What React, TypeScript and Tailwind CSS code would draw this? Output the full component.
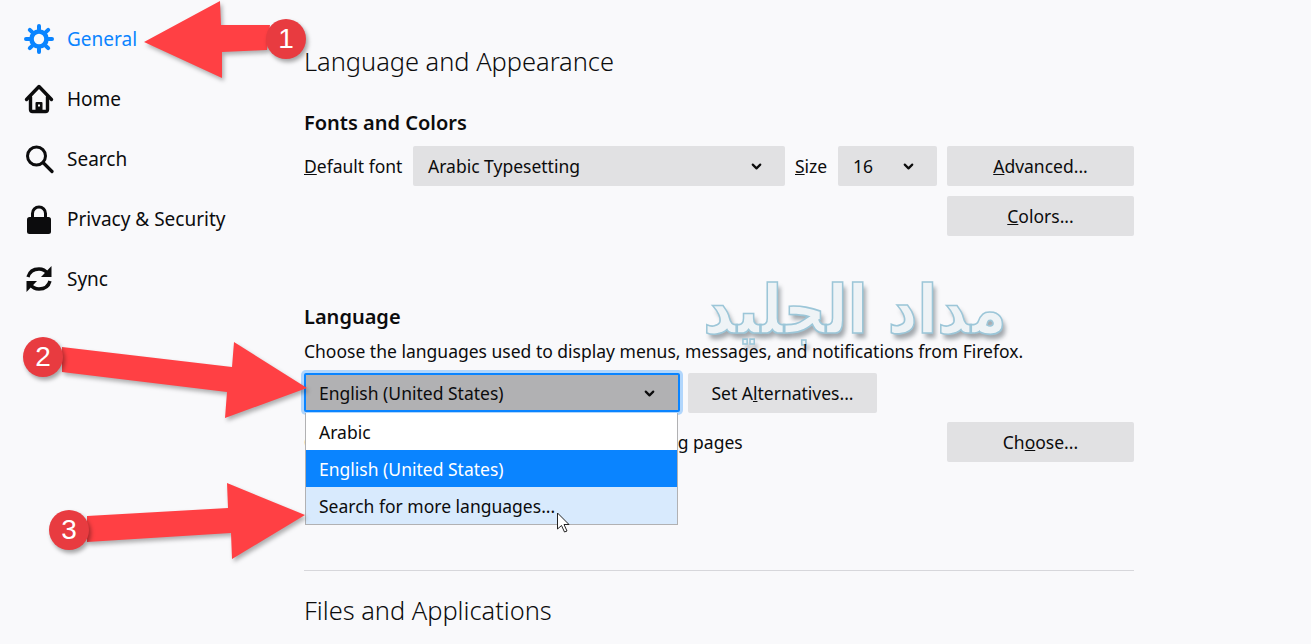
import React from "react";
import { ChevronDown } from "lucide-react";

const font = { fontFamily: '"Noto Sans", "Open Sans", sans-serif' };

const GearIcon = () => (
  <svg width="30" height="30" viewBox="0 0 30 30" fill="none" stroke="#0a84ff" strokeLinecap="round">
    <circle cx="15" cy="15" r="7.5" strokeWidth="4.6" />
    <g strokeWidth="4">
      <path d="M15 2v3.500M15 24.500V28M2 15h3.500M24.500 15H28" />
      <path d="M5.800 5.800l2.400 2.400M21.800 21.800l2.400 2.400M5.800 24.200l2.400-2.400M21.800 8.200l2.400-2.400" />
    </g>
  </svg>
);

const HomeIcon = () => (
  <svg width="30" height="30" viewBox="0 0 30 30" fill="none" stroke="#0c0c0d" strokeLinecap="round" strokeLinejoin="round">
    <path d="M2.500 15.500 15 2.500l12.500 13" strokeWidth="3.400" />
    <path d="M6.500 13v12.500a2 2 0 0 0 2 2h13a2 2 0 0 0 2-2V13" strokeWidth="3.400" />
    <path d="M11.500 27v-8a1 1 0 0 1 1-1h5a1 1 0 0 1 1 1v8z" fill="#0c0c0d" stroke="none" />
    <rect x="14" y="20.500" width="2" height="2" fill="#fff" stroke="none" />
  </svg>
);

const SearchIcon = () => (
  <svg width="30" height="30" viewBox="0 0 30 30" fill="none" stroke="#0c0c0d" strokeLinecap="round">
    <circle cx="12.500" cy="12" r="9" strokeWidth="3" />
    <path d="M19.500 19 28 27.500" strokeWidth="3.200" />
  </svg>
);

const LockIcon = () => (
  <svg width="30" height="30" viewBox="0 0 30 30" fill="none">
    <path d="M8.500 14V9.500a6.500 6.500 0 0 1 13 0V14" stroke="#0c0c0d" strokeWidth="3" />
    <rect x="3" y="13" width="24" height="17" rx="2.500" fill="#0c0c0d" />
  </svg>
);

const SyncIcon = () => (
  <svg width="30" height="30" viewBox="0 0 30 30" fill="none" stroke="#0c0c0d" strokeWidth="3.400">
    <path d="M4 13C5.500 7.500 10 5 15 5c3.500 0 6.500 1.500 8.500 4.500" />
    <path d="M26 17c-1.500 5.500-6 8-11 8-3.500 0-6.500-1.500-8.500-4.500" />
    <path d="M27.500 2v11h-10.500z" fill="#0c0c0d" stroke="none" />
    <path d="M2.500 28V17h10.500z" fill="#0c0c0d" stroke="none" />
  </svg>
);

const navItems = [
  { label: "General", icon: <GearIcon />, active: true },
  { label: "Home", icon: <HomeIcon /> },
  { label: "Search", icon: <SearchIcon /> },
  { label: "Privacy & Security", icon: <LockIcon /> },
  { label: "Sync", icon: <SyncIcon /> },
];

const GreyButton = ({ children, className = "" }: { children: React.ReactNode; className?: string }) => (
  <div className={`h-10 rounded-[2px] bg-[#e1e1e3] flex items-center justify-center text-[#0c0c0d] ${className}`}>{children}</div>
);

const Badge = ({ n, className }: { n: number; className: string }) => (
  <div
    className={`absolute w-10 h-10 rounded-full bg-[#e83b40] text-white flex items-center justify-center text-[28px] shadow-[2px_3px_4px_rgba(0,0,0,0.35)] ${className}`}
    style={{ fontFamily: '"Liberation Sans", sans-serif' }}
  >
    {n}
  </div>
);

export default function App() {
  return (
    <div className="relative flex w-[1311px] h-[644px] overflow-hidden bg-[#f9f9fb] text-[#0c0c0d] text-[17.5px]" style={font}>
      {/* sidebar */}
      <nav className="w-[304px] shrink-0 pt-[9px] pl-[24px] text-[19px]">
        {navItems.map((item) => (
          <div key={item.label} className={`h-[60px] flex items-center gap-[13px] ${item.active ? "text-[#0a84ff]" : ""}`}>
            {item.icon}
            <span>{item.label}</span>
          </div>
        ))}
      </nav>

      {/* main column */}
      <main className="w-[830px] flex flex-col">
        <h1 className="mt-[43px] h-9 leading-9 text-[25.4px] font-light">Language and Appearance</h1>

        <h2 className="mt-[30px] h-7 leading-7 text-[20px] font-semibold">Fonts and Colors</h2>
        <div className="mt-[9px] flex items-center">
          <span className="w-[109px]"><u>D</u>efault font</span>
          <div className="w-[372px] h-10 rounded-[2px] bg-[#e1e1e3] flex items-center justify-between pl-[15px] pr-[21px]">
            <span>Arabic Typesetting</span>
            <ChevronDown size={15} strokeWidth={3.5} />
          </div>
          <span className="ml-[10px] w-[43px]"><u>S</u>ize</span>
          <div className="w-[99px] h-10 rounded-[2px] bg-[#e1e1e3] flex items-center justify-between pl-[15px] pr-[21px]">
            <span>16</span>
            <ChevronDown size={15} strokeWidth={3.5} />
          </div>
          <GreyButton className="ml-[10px] w-[187px]"><span><u>A</u>dvanced...</span></GreyButton>
        </div>
        <GreyButton className="mt-[10px] ml-[643px] w-[187px]"><span><u>C</u>olors...</span></GreyButton>

        <h2 className="mt-[67px] h-7 leading-7 text-[20px] font-semibold">Language</h2>
        <p className="relative z-10 mt-[6px] h-7 leading-7 whitespace-nowrap">Choose the languages used to display menus, messages, and notifications from Firefox.</p>

        <div className="mt-[8px] flex relative">
          <div className="w-[376px] h-[39px] pt-[1px] rounded-[2px] bg-[#b1b1b3] border-2 border-[#0a84ff] shadow-[0_0_0_3px_rgba(10,132,255,0.3)] flex items-center justify-between pl-[13px] pr-[21px]">
            <span>English (United States)</span>
            <ChevronDown size={15} strokeWidth={3.5} />
          </div>
          <GreyButton className="ml-[8px] w-[189px] relative z-10"><span>Set A<u>l</u>ternatives...</span></GreyButton>

          {/* open dropdown */}
          <div className="absolute z-10 left-[1px] top-[40px] w-[373px] border border-[#b1b1b3] border-t-0 bg-white">
            <div className="h-[37px] pt-[2px] flex items-center pl-[13px]">Arabic</div>
            <div className="h-[37px] pt-[2px] flex items-center pl-[13px] bg-[#0a84ff] text-white">English (United States)</div>
            <div className="h-[37px] pt-[2px] flex items-center pl-[13px] bg-[#d8eafd]">Search for more languages...</div>
          </div>
        </div>

        <div className="mt-[9px] flex items-center justify-between">
          <span>Choose your preferred language for displaying pages</span>
          <GreyButton className="w-[187px]"><span>Ch<u>o</u>ose...</span></GreyButton>
        </div>

        <hr className="mt-[108px] border-[#d7d7db]" />
        <h1 className="mt-[21px] h-9 leading-9 text-[25.4px] font-light">Files and Applications</h1>
      </main>

      {/* watermark */}
      <div
        dir="rtl"
        className="absolute z-[5] left-[695px] top-[270px] w-[320px] text-center whitespace-nowrap font-bold text-[58px] leading-[80px] scale-y-[1.15] text-[#eef3f6] [-webkit-text-stroke:1.5px_#9cc6d8] [text-shadow:3px_4px_4px_rgba(60,70,80,0.45)] pointer-events-none"
        style={{ fontFamily: '"DejaVu Sans", sans-serif' }}
      >
        مداد الجليد
      </div>

      {/* annotation arrows */}
      <svg className="absolute inset-0 z-20 pointer-events-none" width="1311" height="644" fill="#ff4044" style={{ filter: "drop-shadow(2px 3px 2px rgba(0,0,0,0.3))" }}>
        <polygon points="144,42 220,1 221,25 270,25 267,50 222,52 222,78" />
        <polygon points="62,347 232,367 234,342 307,388 225,418 227,392 62,372" />
        <polygon points="87,516 228,508 227,483 305,515 232,559 231,533 87,542" />
      </svg>
      <Badge n={1} className="z-20 left-[266px] top-[19px]" />
      <Badge n={2} className="z-20 left-[23px] top-[337px]" />
      <Badge n={3} className="z-20 left-[49px] top-[510px]" />

      {/* mouse cursor */}
      <svg className="absolute z-30 left-[556px] top-[512px]" width="15" height="22" viewBox="0 0 15 22">
        <path d="M1.500 1v16l4-3.500 3 6.500 2.500-1-3-6.500h5z" fill="#fff" stroke="#222" strokeWidth="1" strokeLinejoin="round" />
      </svg>
    </div>
  );
}
